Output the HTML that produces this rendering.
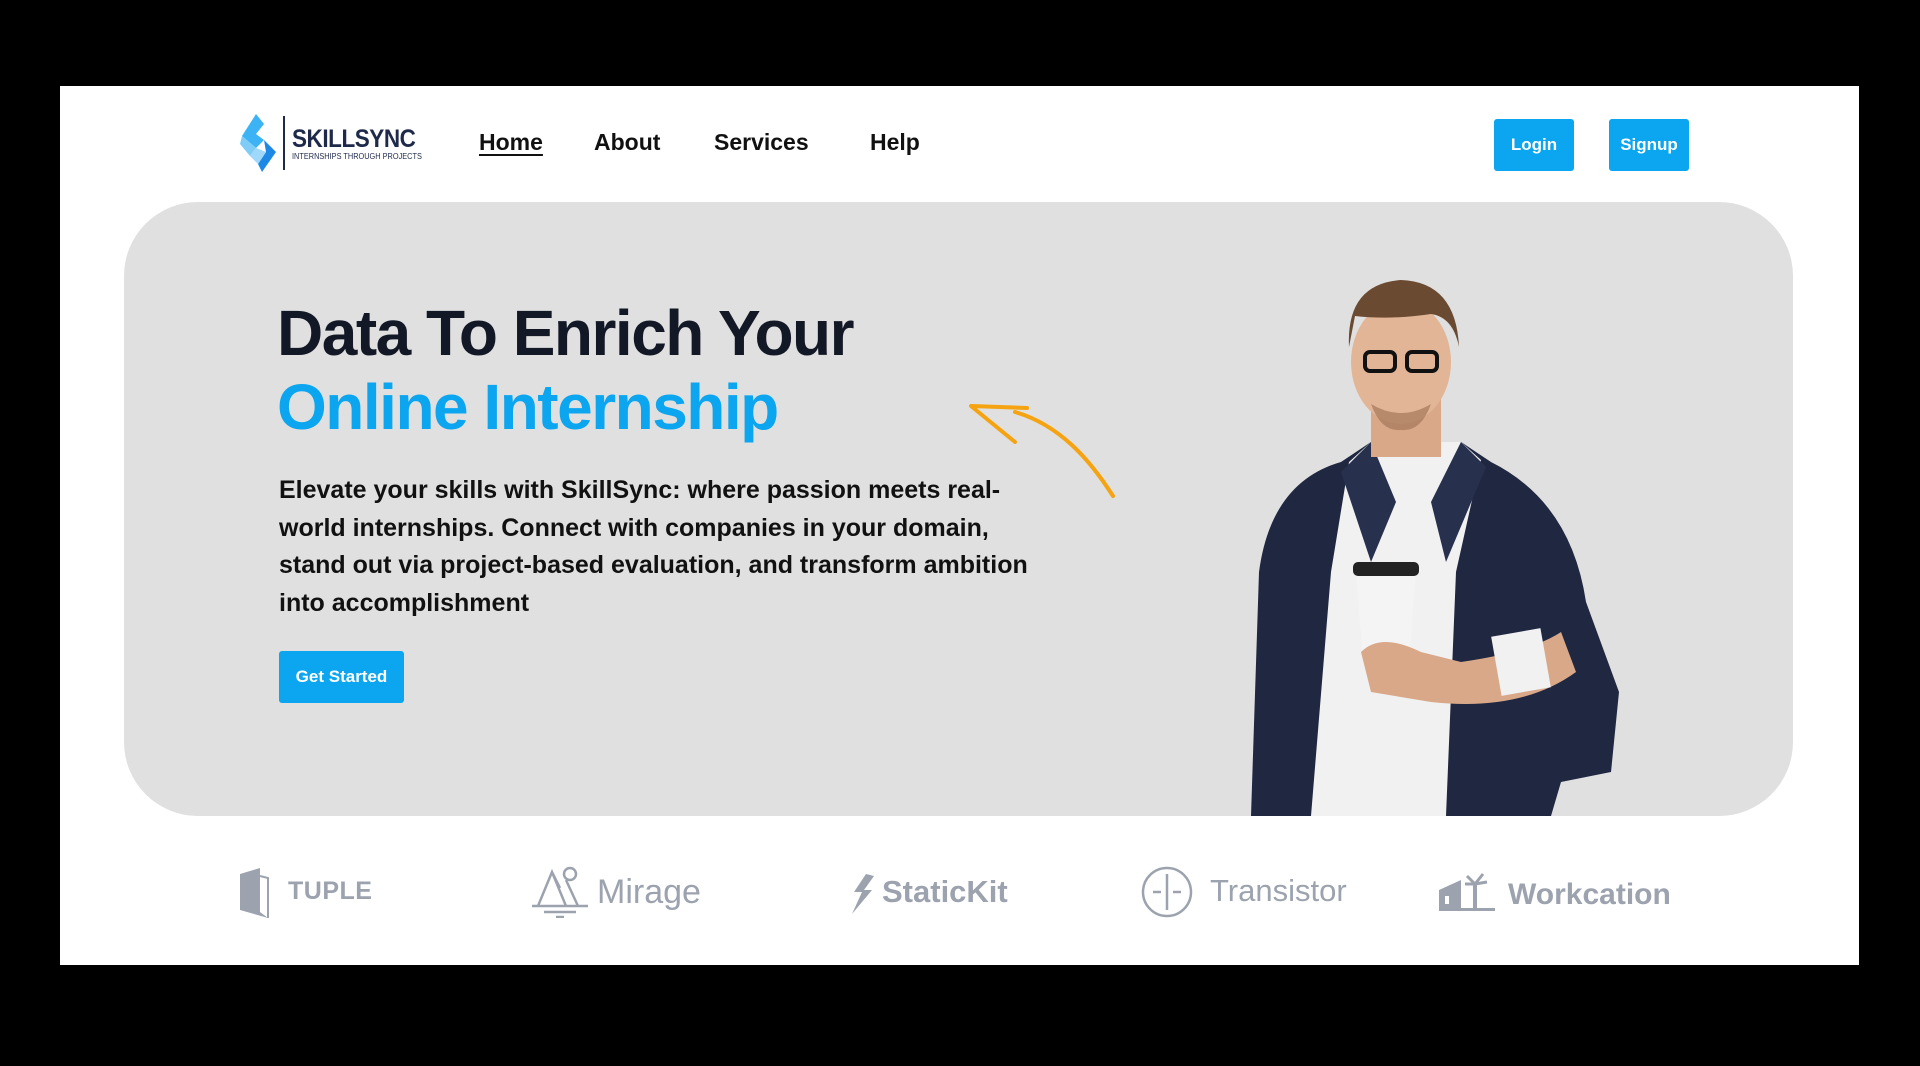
<!DOCTYPE html>
<html><head><meta charset="utf-8"><style>
*{margin:0;padding:0;box-sizing:border-box}
body{width:1920px;height:1066px;background:#000;position:relative;overflow:hidden;font-family:"Liberation Sans",sans-serif}
.panel{position:absolute;left:60px;top:86px;width:1799px;height:879px;background:#fff}
.a{position:absolute}
.nav{font-size:23px;font-weight:bold;color:#111;top:129px}
.btn{background:#0ba5f0;color:#fff;font-size:17px;font-weight:bold;border-radius:3px;display:flex;align-items:center;justify-content:center}
.hero{left:124px;top:202px;width:1669px;height:614px;background:#e0e0e0;border-radius:74px}
.logo{color:#9ca3af;font-weight:bold;font-size:31px}
</style></head><body>
<div class="panel"></div>
<svg class="a" style="left:240px;top:114px" width="48" height="58" viewBox="0 0 48 58">
<polygon points="16,0 2,22 16,34 24,26 16,20 24,10" fill="#3bb3f5"/>
<polygon points="2,22 16,34 10,42 0,30" fill="#7fcdf7"/>
<polygon points="24,26 36,38 22,58 18,50 26,38" fill="#1e88e5"/>
<polygon points="16,34 26,38 18,50 10,42" fill="#9fd8fa"/>
</svg>
<div class="a" style="left:283px;top:116px;width:2px;height:54px;background:#1f2a4a"></div>
<div class="a" style="left:292px;top:125px;font-size:25px;font-weight:bold;color:#1f2a4a;letter-spacing:-0.5px;transform:scaleX(0.9);transform-origin:left">SKILLSYNC</div>
<div class="a" style="left:292px;top:152px;font-size:8px;color:#1f2a4a;transform:scaleX(0.92);transform-origin:left">INTERNSHIPS THROUGH PROJECTS</div>
<div class="a nav" style="left:479px;text-decoration:underline;text-underline-offset:4px">Home</div>
<div class="a nav" style="left:594px">About</div>
<div class="a nav" style="left:714px">Services</div>
<div class="a nav" style="left:870px">Help</div>
<div class="a btn" style="left:1494px;top:119px;width:80px;height:52px">Login</div>
<div class="a btn" style="left:1609px;top:119px;width:80px;height:52px">Signup</div>
<div class="a hero"></div>
<div class="a" style="left:277px;top:296px;font-size:64px;font-weight:bold;color:#121826;letter-spacing:-1.5px;line-height:74px">Data To Enrich Your<br><span style="color:#0ba5f0">Online Internship</span></div>
<div class="a" style="left:279px;top:472px;width:770px;font-size:25px;font-weight:bold;color:#111;line-height:37.5px">Elevate your skills with SkillSync: where passion meets real-world internships. Connect with companies in your domain, stand out via project-based evaluation, and transform ambition into accomplishment</div>
<div class="a btn" style="left:279px;top:651px;width:125px;height:52px">Get Started</div>
<svg class="a" style="left:965px;top:400px" width="155" height="100" viewBox="0 0 155 100">
<path d="M148 96 C125 60 95 25 50 12" stroke="#f5a310" stroke-width="4" fill="none" stroke-linecap="round"/>
<path d="M62 8 L6 6 L50 42" stroke="#f5a310" stroke-width="4" fill="none" stroke-linecap="round" stroke-linejoin="round"/>
</svg>
<svg class="a" style="left:1231px;top:272px" width="390" height="544" viewBox="0 0 390 544">
<path d="M20 544 L28 300 Q40 210 110 190 L140 170 L230 170 L260 190 Q340 230 355 330 L388 420 L380 500 L330 510 L320 544 Z" fill="#1f2840"/>
<path d="M118 190 L140 170 L230 170 L250 188 L225 300 L215 544 L80 544 L100 300 Z" fill="#f1f1f1"/>
<path d="M140 170 L110 200 L140 290 L165 230 Z" fill="#27314d"/>
<path d="M230 170 L255 195 L215 290 L200 230 Z" fill="#27314d"/>
<rect x="140" y="120" width="70" height="65" fill="#d9a889"/>
<ellipse cx="170" cy="90" rx="50" ry="62" fill="#e2b597"/>
<path d="M118 75 Q115 12 170 8 Q225 10 228 75 Q222 45 200 42 Q160 48 124 44 Z" fill="#6b4a32"/>
<rect x="134" y="80" width="30" height="19" rx="5" fill="none" stroke="#111" stroke-width="4"/>
<rect x="176" y="80" width="30" height="19" rx="5" fill="none" stroke="#111" stroke-width="4"/>
<path d="M140 132 Q170 150 200 132 Q190 160 170 158 Q150 160 140 132Z" fill="#9b6e50" opacity=".6"/>
<path d="M125 300 L185 300 L178 390 L132 390Z" fill="#f4f4f4"/>
<rect x="122" y="290" width="66" height="14" rx="5" fill="#222"/>
<path d="M130 380 Q150 360 190 380 L230 390 Q300 380 330 360 L345 400 Q290 440 200 430 L140 420 Z" fill="#d9a889"/>
<rect x="265" y="360" width="50" height="60" fill="#f1f1f1" transform="rotate(-10 290 390)"/>
</svg>
<svg class="a" style="left:238px;top:868px" width="32" height="50" viewBox="0 0 32 50"><path d="M2 6 L22 0 L22 44 L30 50 L2 42Z" fill="#9ca3af"/><path d="M22 8 L30 10 L30 50" stroke="#9ca3af" stroke-width="2" fill="none"/></svg>
<div class="a logo" style="left:288px;top:877px;font-size:25px;letter-spacing:0.5px">TUPLE</div>
<svg class="a" style="left:530px;top:866px" width="60" height="52" viewBox="0 0 60 52" fill="none" stroke="#9ca3af" stroke-width="2.5"><path d="M8 40 L22 6 L36 40 M22 6 L30 22"/><circle cx="40" cy="8" r="6"/><path d="M36 14 L48 40 M2 40 L58 40 M14 46 L46 46 M26 51 L34 51"/></svg>
<div class="a logo" style="left:597px;top:873px;font-weight:normal;font-size:34px">Mirage</div>
<svg class="a" style="left:850px;top:874px" width="26" height="40" viewBox="0 0 26 40"><path d="M16 0 L4 18 L12 18 L2 40 L22 16 L14 16 L24 2Z" fill="#9ca3af"/></svg>
<div class="a logo" style="left:882px;top:874px">StaticKit</div>
<svg class="a" style="left:1141px;top:866px" width="52" height="52" viewBox="0 0 52 52" fill="none" stroke="#9ca3af" stroke-width="2.5"><circle cx="26" cy="26" r="24"/><path d="M26 8 L26 44 M12 26 L20 26 M32 26 L40 26"/></svg>
<div class="a logo" style="left:1210px;top:873px;font-weight:normal;font-size:31px">Transistor</div>
<svg class="a" style="left:1439px;top:872px" width="56" height="40" viewBox="0 0 56 40" fill="#9ca3af"><path d="M0 18 L22 8 L22 38 L0 38Z"/><rect x="0" y="36" width="56" height="3"/><rect x="34" y="12" width="4" height="26"/><path d="M36 12 L28 4 M36 12 L44 2 M36 12 L48 10 M36 12 L26 12" stroke="#9ca3af" stroke-width="3"/><rect x="6" y="24" width="4" height="8" fill="#fff"/></svg>
<div class="a logo" style="left:1508px;top:878px;font-size:30px">Workcation</div>
</body></html>
